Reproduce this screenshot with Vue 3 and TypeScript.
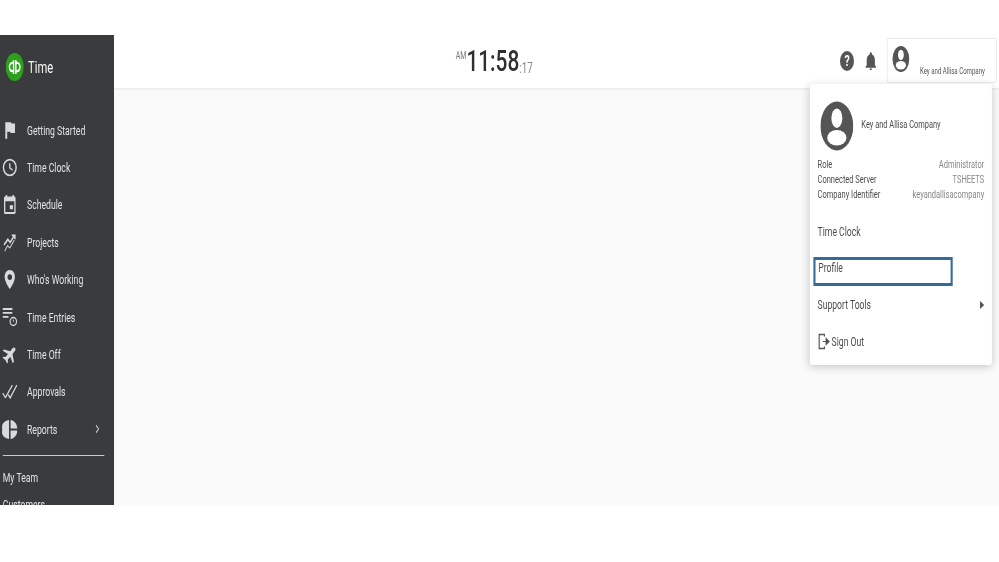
<script setup lang="ts">
interface NavItem {
  label: string
  key: string
  chevron?: boolean
}

const navItems: NavItem[] = [
  { label: 'Getting Started', key: 'flag' },
  { label: 'Time Clock', key: 'clock' },
  { label: 'Schedule', key: 'event' },
  { label: 'Projects', key: 'projects' },
  { label: "Who's Working", key: 'pin' },
  { label: 'Time Entries', key: 'entries' },
  { label: 'Time Off', key: 'plane' },
  { label: 'Approvals', key: 'approvals' },
  { label: 'Reports', key: 'reports', chevron: true }
]

const infoRows = [
  { label: 'Role', value: 'Administrator' },
  { label: 'Connected Server', value: 'TSHEETS' },
  { label: 'Company Identifier', value: 'keyandallisacompany' }
]
</script>

<template>
  <div class="stage">
    <div class="app">
      <aside class="sidebar">
        <div class="brand">
          <svg class="logo" viewBox="0 0 24 24" preserveAspectRatio="none">
            <circle cx="12" cy="12" r="12" fill="#2ca01c" />
            <path d="M10.5 6v12M13.5 6v12M10.5 8.5H8.6a3.5 3.5 0 0 0 0 7h1.900M13.5 8.500h1.900a3.500 3.500 0 0 1 0 7h-1.900" fill="none" stroke="#fff" stroke-width="1.900" />
          </svg>
          <span class="brand-name">Time</span>
        </div>
        <nav class="nav">
          <div v-for="item in navItems" :key="item.label" class="nav-item">
            <svg class="nav-icon" viewBox="0 0 24 24" preserveAspectRatio="none">
              <path v-if="item.key === 'flag'" d="M14.400 3 14 1.500H5v21h3v-9h4.600l.5 1.500h7V3z" />
              <path v-else-if="item.key === 'clock'" d="M12 1a11 11 0 1 0 0 22 11 11 0 0 0 0-22zm0 19.800a8.800 8.800 0 1 1 0-17.600 8.800 8.800 0 0 1 0 17.600zM13 6.500h-2v6.300l5 3.400 1-1.500-4-2.800z" />
              <path v-else-if="item.key === 'event'" d="M17 13h-5v5h5v-5zM16 0v2H8V0H5.500v2H5c-1.110 0-2 .9-2 2v18c0 1.100.89 2 2 2h14c1.100 0 2-.9 2-2V4c0-1.100-.9-2-2-2h-.5V0H16zm3 21.500H5V8h14v13.500z" />
              <g v-else-if="item.key === 'projects'" fill="none" stroke-width="2.200">
                <path d="M3 15 9 8l3.500 4L19 3.500M15 3h5v5" />
                <path d="M4 23l4.500-7 3.500 3 7-10" stroke-width="1.400" />
              </g>
              <path v-else-if="item.key === 'pin'" fill-rule="evenodd" d="M12 0C7 0 4 4 4 9c0 6 8 15 8 15s8-9 8-15c0-5-3-9-8-9zm0 12.500a3.500 3.500 0 1 1 0-7 3.500 3.500 0 0 1 0 7z" />
              <g v-else-if="item.key === 'entries'">
                <path d="M1 0h15v2.400H1zM1 5h15v2.400H1zM1 10h9v2.400H1z" />
                <circle cx="17.500" cy="17" r="5" fill="none" stroke-width="1.800" />
                <path d="M17.500 14.500V17.500" fill="none" stroke-width="1.400" />
              </g>
              <path v-else-if="item.key === 'plane'" transform="rotate(45 12 12)" d="M23 16.500V14l-8.500-5.500V3C14.500 1.500 13.200.5 12 .5S9.500 1.500 9.500 3v5.500L1 14v2.500l8.500-3V19L7 21v2l5-1.200L17 23v-2l-2.500-2v-5.500z" />
              <g v-else-if="item.key === 'approvals'" fill="none" stroke-width="1.900">
                <path d="M1 14l4.500 6" />
                <path d="M5 20L16 4" />
                <path d="M9.500 16l3 4L23 4" />
              </g>
              <g v-else-if="item.key === 'reports'">
                <path d="M10.800 0a12 12 0 0 0 0 24z" />
                <path d="M13.200 0A12 12 0 0 1 24 10.800H13.200zM13.200 13.200H24A12 12 0 0 1 13.200 24z" />
              </g>
            </svg>
            <span class="nav-label">{{ item.label }}</span>
            <svg v-if="item.chevron" class="chevron" viewBox="0 0 10 16">
              <path d="M2 2l6 6-6 6" fill="none" stroke-width="1.800" />
            </svg>
          </div>
        </nav>
        <div class="divider"></div>
        <div class="sub-item">My Team</div>
        <div class="sub-item">Customers</div>
      </aside>

      <div class="main">
        <header class="topbar">
          <div class="clock">
            <span class="ampm">AM</span><span class="time">11:58</span><span class="secs">:17</span>
          </div>
          <div class="tools">
            <span class="help">?</span>
            <svg class="bell" viewBox="0 0 24 24">
              <path d="M12 23c1.200 0 2.100-.9 2.100-2H9.900c0 1.100.9 2 2.100 2zm7-6v-6c0-3.300-1.800-6-5-6.800V3.500a2 2 0 0 0-4 0v.7C6.800 5 5 7.700 5 11v6l-2 2v1h18v-1l-2-2z" />
            </svg>
            <div class="user-box">
              <svg class="avatar avatar-small" viewBox="0 0 48 50">
                <ellipse cx="24" cy="25" rx="23" ry="25" fill="#555" />
                <ellipse cx="24" cy="17" rx="8" ry="10" fill="#fff" />
                <ellipse cx="24" cy="37" rx="14" ry="8" fill="#fff" />
              </svg>
              <span class="user-name">Key and Allisa Company</span>
            </div>
          </div>
        </header>
        <div class="content"></div>
      </div>

      <section class="popup">
        <div class="popup-head">
          <svg class="avatar avatar-large" viewBox="0 0 48 50">
            <ellipse cx="24" cy="25" rx="24" ry="25" fill="#555" />
            <ellipse cx="24" cy="17" rx="8" ry="10" fill="#fff" />
            <ellipse cx="24" cy="37" rx="14" ry="8" fill="#fff" />
          </svg>
          <span class="popup-name">Key and Allisa Company</span>
        </div>
        <dl class="info">
          <div v-for="row in infoRows" :key="row.label" class="info-row">
            <dt>{{ row.label }}</dt>
            <dd>{{ row.value }}</dd>
          </div>
        </dl>
        <ul class="menu">
          <li class="menu-item">Time Clock</li>
          <li class="menu-item focused">Profile</li>
          <li class="menu-item between">
            <span>Support Tools</span>
            <span class="caret"></span>
          </li>
          <li class="menu-item">
            <svg class="signout" viewBox="0 0 24 24" preserveAspectRatio="none">
              <path d="M13 5V2H3v20h10v-3" fill="none" stroke="#555" stroke-width="2.200" />
              <path d="M10 12h9M16 7.500l6 4.500-6 4.500z" fill="#555" stroke="#555" stroke-width="1.600" />
            </svg>
            <span>Sign Out</span>
          </li>
        </ul>
      </section>
    </div>
  </div>
</template>

<style>
html,
body {
  margin: 0;
  background: #fff;
  overflow: hidden;
}
</style>

<style scoped>
.stage {
  width: 999px;
  height: 562px;
  padding-top: 35px;
  box-sizing: border-box;
  overflow: hidden;
  background: #fff;
  font-family: Roboto, "Liberation Sans", sans-serif;
}

.app {
  position: relative;
  display: flex;
  width: 1427px;
  height: 470px;
  overflow: hidden;
  transform: scaleX(0.7);
  transform-origin: left top;
  filter: blur(0.3px);
}

.sidebar {
  flex: none;
  width: 163px;
  height: 470px;
  overflow: hidden;
  background: #3a3b3d;
  color: #e2e3e4;
}

.brand {
  display: flex;
  align-items: center;
  gap: 6px;
  height: 28px;
  margin-top: 18px;
  padding-left: 8px;
}

.logo {
  flex: none;
  width: 26px;
  height: 28px;
}

.brand-name {
  font-size: 16px;
  color: #f6f6f6;
}

.nav {
  display: flex;
  flex-direction: column;
  margin-top: 30.500px;
}

.nav-item {
  display: flex;
  align-items: center;
  height: 37.400px;
  padding-left: 3px;
  font-size: 12.400px;
}

.nav-icon {
  flex: none;
  width: 22px;
  height: 19px;
  margin-right: 13.600px;
  fill: #d9dadb;
  stroke: #d9dadb;
  stroke-width: 0;
}

.nav-label {
  flex: 1;
}

.chevron {
  flex: none;
  width: 10px;
  height: 10px;
  margin-right: 19px;
  stroke: #d2d3d4;
}

.divider {
  height: 1px;
  margin: 6.500px 14px 14px 4px;
  background: #c9c9c9;
}

.sub-item {
  height: 27px;
  line-height: 16px;
  padding-left: 4px;
  font-size: 12.400px;
}

.main {
  flex: 1;
  display: flex;
  flex-direction: column;
  min-width: 0;
}

.topbar {
  position: relative;
  flex: none;
  display: flex;
  align-items: flex-start;
  justify-content: space-between;
  box-sizing: border-box;
  height: 55px;
  padding-left: 488px;
  background: #fff;
  border-bottom: 2px solid #eceef0;
}

.clock {
  display: flex;
  align-items: flex-start;
  margin-top: 8px;
  color: #333;
}

.ampm {
  margin: 7px 0 0 0;
  font-size: 10px;
  color: #777;
}

.time {
  font-size: 29.800px;
  line-height: 36px;
  font-weight: 500;
  color: #2f2f2f;
}

.secs {
  margin-top: 17px;
  font-size: 14px;
  color: #888;
}

.tools {
  display: flex;
  align-items: flex-start;
  padding-right: 3px;
}

.help {
  width: 20px;
  height: 20px;
  margin: 16px 14px 0 0;
  border-radius: 50%;
  background: #555;
  color: #fff;
  font-size: 15px;
  font-weight: 700;
  line-height: 20px;
  text-align: center;
}

.bell {
  width: 20px;
  height: 20px;
  margin: 16px 13px 0 0;
  fill: #555;
}

.user-box {
  position: relative;
  box-sizing: border-box;
  width: 157px;
  height: 45px;
  margin-top: 3px;
  background: #fff;
  border: 1px solid #e6e6e6;
  border-radius: 2px;
}

.avatar {
  display: block;
  flex: none;
}

.avatar-small {
  width: 26px;
  height: 26px;
  margin: 7px 0 0 6px;
}

.user-name {
  position: absolute;
  right: 16px;
  bottom: 6px;
  font-size: 8.700px;
  color: #555;
  white-space: nowrap;
}

.content {
  flex: 1;
  background: #fafafa;
}

.popup {
  position: absolute;
  top: 49px;
  left: 1157px;
  box-sizing: border-box;
  width: 260px;
  height: 281px;
  padding: 17px 11px 0;
  background: #fff;
  border-radius: 3px;
  box-shadow: 0 2px 10px rgba(0, 0, 0, 0.2);
  color: #4d4d4d;
}

.popup-head {
  display: flex;
  align-items: flex-start;
  gap: 11.500px;
  margin-left: 4px;
}

.avatar-large {
  width: 47px;
  height: 50px;
}

.popup-name {
  margin-top: 17px;
  font-size: 10.600px;
}

.info {
  margin: 6px 0 0;
  font-size: 10.700px;
}

.info-row {
  display: flex;
  justify-content: space-between;
  height: 15px;
  line-height: 15px;
}

.info-row dd {
  margin: 0;
  color: #888;
}

.menu {
  display: flex;
  flex-direction: column;
  margin: 11.500px 0 0;
  padding: 0;
  list-style: none;
}

.menu-item {
  display: flex;
  align-items: center;
  height: 36.500px;
  font-size: 12.300px;
}

.between {
  justify-content: space-between;
}

.focused {
  box-sizing: border-box;
  width: 199px;
  height: 29px;
  margin: 7px 0 1px -6px;
  padding: 0 0 7px 4px;
  border: 3px solid #336b9c;
}

.caret {
  width: 0;
  height: 0;
  border-top: 4px solid transparent;
  border-bottom: 4px solid transparent;
  border-left: 6px solid #555;
}

.signout {
  width: 18px;
  height: 17px;
  margin-right: 2px;
}
</style>
